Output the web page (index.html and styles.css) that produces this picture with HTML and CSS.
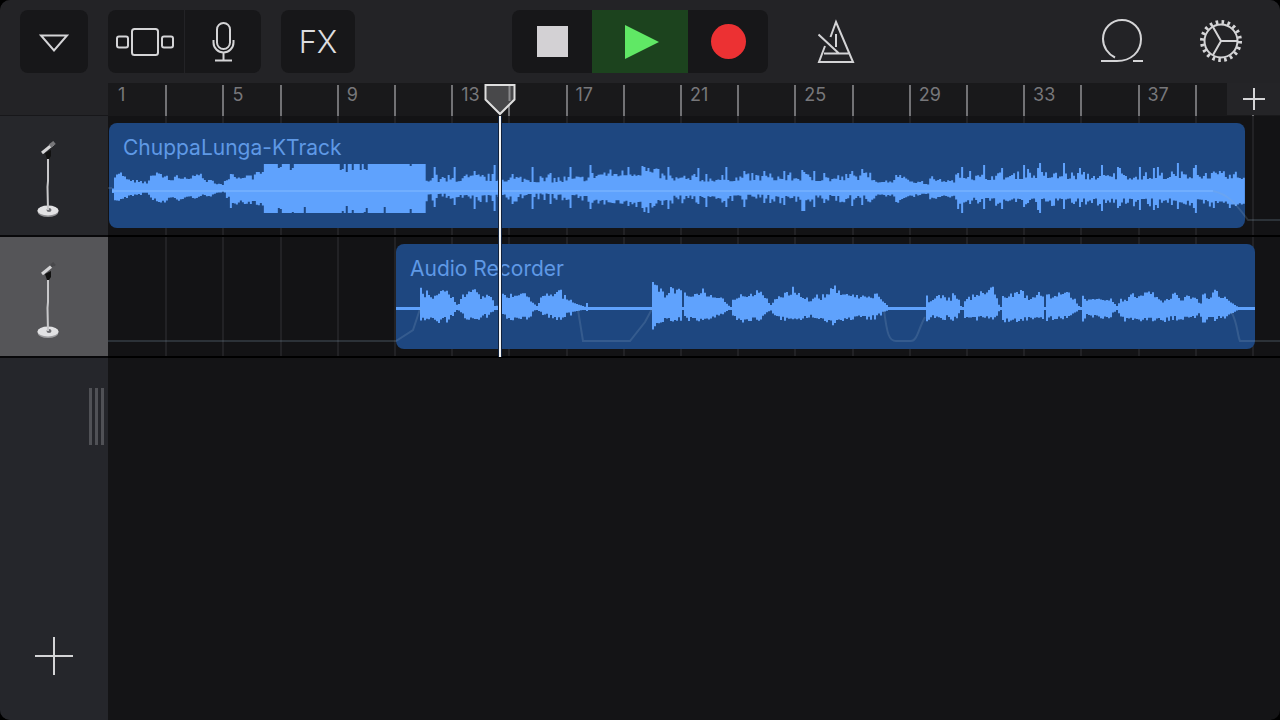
FILE: index.html
```html
<!DOCTYPE html>
<html lang="en">
<head>
<meta charset="utf-8">
<title>Tracks</title>
<link rel="stylesheet" href="styles.css">
</head>
<body>
<div class="app">
  <header class="toolbar">
    <div class="tools-left">
      <button class="tool tool-menu" type="button" aria-label="Menu">
        <svg width="32" height="22" viewBox="0 0 32 22"><path class="line" d="M3 4.500H29L16 19.500Z"/></svg>
      </button>
      <div class="tool-pair">
        <button class="tool" type="button" aria-label="Tracks view">
          <svg width="60" height="32" viewBox="1 0 60 32"><rect class="line" x="17" y="3" width="26" height="26" rx="2.500"/><rect class="line" x="2" y="10.500" width="11" height="11" rx="2"/><rect class="line" x="47" y="10.500" width="11" height="11" rx="2"/></svg>
        </button>
        <button class="tool" type="button" aria-label="Audio recorder">
          <svg width="26" height="42" viewBox="0 0 26 42"><rect class="line" x="7" y="2" width="13" height="26" rx="6.500"/><path class="line" d="M3.500 19v2.500a10 10 0 0 0 20 0V19M13.500 31.500V39M5 39.500h17"/></svg>
        </button>
      </div>
      <button class="tool tool-fx" type="button">FX</button>
    </div>

    <div class="transport">
      <button class="tool" type="button" aria-label="Stop"><span class="stop"></span></button>
      <button class="tool tool-play" type="button" aria-label="Play">
        <svg width="40" height="36" viewBox="-4 0 40 36"><path fill="#60e865" d="M1 1L35 18L1 35Z"/></svg>
      </button>
      <button class="tool" type="button" aria-label="Record"><span class="record"></span></button>
    </div>

    <div class="tools-right">
      <button class="plain" type="button" aria-label="Metronome">
        <svg width="42" height="48" viewBox="0 1 42 48"><path class="line" d="M15.500 20L21 5L38 45H4L10 29M9 36.500H35M3.500 17.500L24 36.500M21 17V30"/></svg>
      </button>
      <div class="view-tools">
        <button class="plain" type="button" aria-label="Loops">
          <svg width="46" height="46" viewBox="0 1 46 46"><path class="line" d="M2 43H18C32 43 42 34 42 21A19 19 0 0 0 4 21C4 29 9 36 16 39.500M34 43h10"/></svg>
        </button>
        <button class="plain" type="button" aria-label="Settings">
          <svg width="44" height="44" viewBox="0 1 44 44"><circle class="line" cx="22" cy="22" r="16.500"/><circle cx="22" cy="22" r="19" fill="none" stroke="#d4d4d6" stroke-width="4" stroke-dasharray="2.600 3.369"/><path class="line" d="M22 22H38M22 22L14 8M22 22L14 36"/></svg>
        </button>
      </div>
    </div>
  </header>

  <main class="workspace">
    <aside class="sidebar">
      <div class="ruler-space"></div>
      <button class="track-head" type="button" aria-label="ChuppaLunga-KTrack track">
        <svg width="24" height="78" viewBox="0 0 24 78"><ellipse cx="12" cy="70.500" rx="10.500" ry="5.500" fill="#8e8e91"/><ellipse cx="12" cy="69.500" rx="10.500" ry="5" fill="#e2e2e4"/><ellipse cx="13" cy="69" rx="2.500" ry="2" fill="#6d6d72"/><path d="M12 15V40L11.500 46L12 69" fill="none" stroke="#c8c8ca" stroke-width="2"/><path d="M9 12l6-3v6l-2 3h-2z" fill="#111"/><path d="M6 12L17 3" stroke="#d5d5d7" stroke-width="3"/><path d="M14 5L18.500 1.500" stroke="#77777a" stroke-width="4"/></svg>
      </button>
      <button class="track-head selected" type="button" aria-label="Audio Recorder track">
        <svg width="24" height="78" viewBox="0 0 24 78"><ellipse cx="12" cy="70.500" rx="10.500" ry="5.500" fill="#9e9ea1"/><ellipse cx="12" cy="69.500" rx="10.500" ry="5" fill="#e2e2e4"/><ellipse cx="13" cy="69" rx="2.500" ry="2" fill="#6d6d72"/><path d="M12 15V40L11.500 46L12 69" fill="none" stroke="#c8c8ca" stroke-width="2"/><path d="M9 12l6-3v6l-2 3h-2z" fill="#111"/><path d="M6 12L17 3" stroke="#d5d5d7" stroke-width="3"/><path d="M15 4.500L18.500 1.500" stroke="#48484b" stroke-width="4"/></svg>
      </button>
      <div class="sidebar-rest">
        <div class="grip"><i></i><i></i><i></i></div>
        <button class="add-track" type="button" aria-label="Add track">
          <svg width="40" height="40" viewBox="0 0 40 40"><path class="line" d="M20 1V39M1 20H39"/></svg>
        </button>
      </div>
    </aside>

    <section class="timeline">
      <div class="ruler bars">
        <span>1</span><span></span><span>5</span><span></span><span>9</span><span></span><span>13</span><span></span><span>17</span><span></span><span>21</span><span></span><span>25</span><span></span><span>29</span><span></span><span>33</span><span></span><span>37</span><span></span><span></span>
      </div>
      <button class="add-section" type="button" aria-label="Song sections">
        <svg width="22" height="22" viewBox="0 0 22 22"><path class="line" d="M11 0V22M0 11H22"/></svg>
      </button>

      <div class="lane">
        <div class="bars grid" aria-hidden="true"><span></span><span></span><span></span><span></span><span></span><span></span><span></span><span></span><span></span><span></span><span></span><span></span><span></span><span></span><span></span><span></span><span></span><span></span><span></span><span></span><span></span></div>
        <article class="region region-music">
          <h2>ChuppaLunga-KTrack</h2>
          <svg class="wave" viewBox="109 161 1137 60" preserveAspectRatio="none"><path id="music-wave" fill="#5fa2fd"/></svg>
        </article>
        <svg class="automation" viewBox="108 116 1172 119" preserveAspectRatio="none"><path d="M108 188H112"/><path class="level" d="M112 191H1213"/><path d="M1213 191C1228 194 1236 204 1248 220H1280"/></svg>
      </div>
      <div class="lane">
        <div class="bars grid" aria-hidden="true"><span></span><span></span><span></span><span></span><span></span><span></span><span></span><span></span><span></span><span></span><span></span><span></span><span></span><span></span><span></span><span></span><span></span><span></span><span></span><span></span><span></span></div>
        <article class="region region-voice">
          <h2>Audio Recorder</h2>
          <svg class="wave" viewBox="396 282 859 60" preserveAspectRatio="none"><path fill="#5fa2fd" d="M396 307H1255V310H396Z"/><path id="voice-wave" fill="#5fa2fd"/></svg>
        </article>
        <svg class="automation" viewBox="108 237 1172 119" preserveAspectRatio="none"><path d="M108 341H396L413 330L420 309"/><path d="M578 310L583 341H630L645 322L652 309"/><path d="M884 310C887 334 889 341 896 341H911C917 341 918 330 925 317"/><path d="M1231 311C1238 324 1237 334 1240 341H1280"/></svg>
      </div>

      <div class="playhead">
        <svg width="32" height="33" viewBox="0 0 32 33"><path d="M1.500 2H30.500V16.500L16 31L1.500 16.500Z" fill="#48484a" stroke="#dedede" stroke-width="2"/><path d="M25.500 3V18" stroke="#8a8a8c" stroke-width="2"/></svg>
        <i></i>
      </div>
    </section>
  </main>
</div>
<script src="waves.js"></script>
</body>
</html>
```

FILE: styles.css
```css
:root {
  --sidebar-w: 108px;
  --ruler-h: 33px;
  --lane-h: 121px;
  --icon: #d4d4d6;
}

* { box-sizing: border-box; }

body {
  margin: 0;
  background: #000;
  font-family: Inter, "Liberation Sans", sans-serif;
}

button {
  display: flex;
  align-items: center;
  justify-content: center;
  margin: 0;
  padding: 0;
  border: 0;
  background: none;
  color: inherit;
  font: inherit;
}

svg { display: block; }

.line {
  fill: none;
  stroke: var(--icon);
  stroke-width: 2;
}

.app {
  display: flex;
  flex-direction: column;
  min-height: 100vh;
  border-radius: 10px;
  overflow: hidden;
  background: #141416;
}

/* Toolbar */
.toolbar {
  display: grid;
  grid-template-columns: 1fr auto 1fr;
  padding: 10px 20px;
  background: #232326;
}

.tools-left { display: flex; gap: 20px; }

.tool {
  width: 76px;
  height: 63px;
  background: #171719;
}

.tool-menu { width: 68px; border-radius: 8px; }

.tool-pair {
  display: flex;
  gap: 1px;
  border-radius: 8px;
  overflow: hidden;
}

.tool-fx {
  width: 74px;
  border-radius: 8px;
  color: #dcdcde;
  font-size: 31px;
  font-weight: 300;
}

.transport {
  display: flex;
  border-radius: 8px;
  background: #171719;
}

.transport .tool { width: 80px; background: none; }
.transport .tool-play { width: 96px; background: #1c431e; }

.stop { width: 31px; height: 31px; background: #d3d1d4; }
.record { width: 35px; height: 35px; border-radius: 50%; background: #ec3133; }

.tools-right {
  display: flex;
  justify-content: space-between;
  padding: 0 7px 0 36px;
}

.plain { width: 64px; height: 63px; }
.view-tools { display: flex; gap: 35px; }

/* Workspace */
.workspace { display: flex; flex: 1; }

.sidebar {
  display: flex;
  flex-direction: column;
  width: var(--sidebar-w);
  background: #25262b;
}

.ruler-space {
  height: var(--ruler-h);
  background: #232326;
  border-bottom: 1px solid #17171a;
}

.track-head {
  height: var(--lane-h);
  padding: 8px 12px 0 0;
  border-bottom: 2px solid #08080a;
  background: #26272b;
}

.track-head.selected { background: #555558; }

.sidebar-rest {
  display: flex;
  flex: 1;
  flex-direction: column;
  justify-content: space-between;
  padding: 30px 0 44px;
}

.grip {
  display: flex;
  gap: 3px;
  justify-content: flex-end;
  padding-right: 4px;
}

.grip i { width: 3px; height: 57px; background: #505156; }
.add-track { height: 40px; }

.timeline { position: relative; flex: 1; }

.bars {
  display: grid;
  grid-template-columns: repeat(20, 57fr) 28fr;
}

.bars span { border-left: 2px solid #727275; }
.bars span:first-child { border-color: transparent; }

.ruler {
  height: var(--ruler-h);
  padding-top: 2px;
  background: #19191b;
  color: #77777a;
  font-size: 18px;
  line-height: 20px;
}

.ruler span { padding-left: 8px; }

.add-section {
  position: absolute;
  top: 0;
  right: 0;
  width: 53px;
  height: 32px;
  background: #242427;
}

.lane {
  position: relative;
  height: var(--lane-h);
  padding-top: 7px;
  border-bottom: 2px solid #000;
  background: #131315;
}

.grid { position: absolute; inset: 0; }
.grid span { border-color: #222225; }

.region {
  position: relative;
  height: 105px;
  border-radius: 8px;
  background: #1e4780;
  overflow: hidden;
}

.region-music { margin: 0 3% 0 1px; }
.region-voice { margin: 0 25px 0 288px; }

.region h2 {
  margin: 0;
  padding: 13px 14px 1px;
  color: #5f99e6;
  font-size: 21px;
  font-weight: 400;
  line-height: 24px;
}

.wave { width: 100%; height: 60px; }

.automation {
  position: absolute;
  inset: 0;
  width: 100%;
  height: 100%;
}

.automation path {
  fill: none;
  stroke: #8fb0c8;
  stroke-opacity: 0.2;
  stroke-width: 2;
}

.automation .level { stroke: #8cc0ff; stroke-opacity: 0.4; }

.playhead {
  position: absolute;
  top: 0;
  left: 376px;
  display: flex;
  flex-direction: column;
  align-items: center;
}

.playhead i {
  width: 4px;
  height: 241px;
  border: solid #10213c;
  border-width: 0 1px;
  background: #f4f4f4;
}
```

FILE: waves.js
```js
// Envelope points: [time, top, bottom]
const music = [
  [112,188,191],[113,178,201],[117,175,200],[119,172,199],[122,177,198],[126,179,197],[130,182,195],[135,182,194],
  [140,183,193],[146,183,193],[150,178,197],[154,175,199],[157,172,202],[160,176,203],[163,178,200],[166,176,201],
  [168,180,198],[172,180,197],[175,176,199],[178,180,200],[182,179,198],[187,180,197],[192,177,196],[196,174,198],
  [199,175,197],[202,179,195],[207,182,194],[212,182,195],[217,184,193],[222,186,192],[224,183,193],[226,180,196],
  [229,178,197],[232,175,201],[236,178,202],[240,178,201],[245,177,203],[250,175,202],[252,179,200],[256,174,203],
  [260,175,203],[263,170,205],[264,164,213],[425,164,213],[426,180,196],[445,181,195],[475,179,197],[500,180,196],
  [545,181,195],[580,181,196],[600,175,201],[625,175,202],[640,174,203],[655,174,205],[662,178,200],[675,180,197],
  [720,180,197],[760,179,196],[800,179,198],[830,180,196],[870,178,197],[880,182,195],[893,182,195],[896,176,201],
  [905,178,198],[912,182,195],[928,184,194],[930,178,199],[938,181,196],[954,182,196],[962,176,202],[975,179,199],
  [1000,178,200],[1040,177,200],[1090,178,200],[1140,178,200],[1190,177,200],[1215,177,202],[1235,178,204],[1246,177,204]
];
const musicPeaks = [
  [231,174,208],[435,167,207],[454,167,205],[475,171,209],[494,165,211],[513,174,204],[532,167,209],[551,173,204],
  [571,167,208],[590,165,209],[628,167,206],[642,166,208],[645,167,212],[649,168,213],[659,169,200],[669,167,209],
  [698,168,204],[707,174,207],[726,167,207],[745,171,207],[765,171,203],[784,171,205],[803,170,211],[805,172,211],
  [815,171,207],[825,173,203],[853,171,206],[862,169,205],[896,175,202],[958,173,209],[962,167,213],[970,171,204],
  [985,165,209],[1003,168,209],[1024,165,207],[1028,169,203],[1039,168,210],[1041,163,213],[1064,163,209],
  [1081,168,207],[1102,165,211],[1119,167,208],[1121,168,206],[1141,167,210],[1155,168,210],[1158,167,208],
  [1179,163,209],[1195,168,208],[1197,165,213]
];
const notches = [[279,168,208],[281,167,209],[290,170,213],[292,168,212],[305,164,207],[340,170,213],[343,169,211],
  [346,172,206],[352,170,210],[360,170,213],[364,169,212],[367,170,208],[385,164,207],[410,166,209]];

const voice = [
  [420,290,320],[423,300,318],[426,290,318],[428,295,318],[431,299,318],[434,296,318],[438,293,320],[441,290,318],
  [444,292,318],[447,290,320],[449,299,316],[452,297,316],[454,302,312],[457,306,309],[459,302,312],[463,297,315],
  [468,294,317],[472,290,319],[476,292,317],[480,298,315],[484,297,314],[488,297,314],[492,301,312],[494,306,309],
  [500,305,310],[503,292,314],[506,298,318],[511,296,320],[515,297,318],[519,294,319],[523,296,317],[527,297,316],
  [531,302,312],[536,306,309],[538,303,311],[542,298,313],[547,296,315],[552,296,316],[556,293,319],[559,290,317],
  [562,298,315],[567,299,313],[571,302,312],[576,304,311],[582,306,310],[585,307,310],[586,303,311],[588,307,310],
  [651,307,310],[652,284,326],[655,284,324],[657,291,322],[660,292,320],[664,297,318],[668,292,319],[671,290,318],
  [674,293,319],[678,288,318],[680,294,317],[682,307,310],[684,296,316],[690,296,318],[697,295,319],[703,290,320],
  [706,296,319],[712,297,317],[718,297,315],[723,300,314],[727,305,310],[730,307,310],[731,299,316],[735,299,317],
  [741,295,320],[747,297,320],[753,295,318],[758,292,318],[761,297,315],[766,301,312],[771,306,310],[773,299,316],
  [778,298,317],[785,296,318],[790,294,319],[792,288,319],[795,294,319],[800,296,318],[808,301,316],[813,302,315],
  [815,292,318],[818,300,317],[822,298,316],[827,295,320],[834,288,322],[837,294,320],[845,294,319],[853,297,317],
  [860,298,316],[866,297,317],[872,298,316],[874,294,316],[878,299,314],[883,302,312],[888,307,310],[924,307,310],
  [925,291,320],[928,302,317],[932,299,316],[938,298,316],[944,298,317],[949,302,315],[952,296,318],[956,299,317],
  [960,306,310],[962,307,310],[963,301,317],[968,300,317],[974,297,318],[980,294,317],[986,293,317],[990,290,318],
  [993,291,318],[996,300,314],[999,307,310],[1001,307,310],[1002,296,320],[1008,298,318],[1015,295,319],
  [1020,292,319],[1024,297,318],[1030,300,317],[1036,295,318],[1042,297,318],[1044,307,310],[1046,294,320],
  [1050,298,317],[1055,297,317],[1062,293,316],[1068,295,317],[1074,301,313],[1078,306,310],[1080,307,310],
  [1081,288,327],[1083,302,315],[1089,300,315],[1096,298,316],[1104,300,317],[1110,300,315],[1116,306,310],
  [1119,302,316],[1125,302,319],[1131,297,317],[1140,297,319],[1146,292,319],[1152,296,318],[1160,302,318],
  [1164,302,319],[1170,298,317],[1174,292,317],[1180,300,318],[1190,298,317],[1197,298,316],[1199,307,310],
  [1202,294,322],[1206,300,317],[1211,297,318],[1214,289,318],[1218,297,317],[1225,298,316],[1230,302,314],[1237,307,310]
];

let seed = 7;
function noise() {
  seed = (seed * 16807) % 2147483647;
  return seed / 2147483647;
}

function sample(points, x) {
  let i = 0;
  while (i < points.length - 2 && points[i + 1][0] <= x) i++;
  const [x0, t0, b0] = points[i];
  const [x1, t1, b1] = points[i + 1];
  const k = Math.min(1, Math.max(0, (x - x0) / (x1 - x0)));
  return [t0 + (t1 - t0) * k, b0 + (b1 - b0) * k];
}

// Builds a stepped silhouette: one bar for each step of time
function draw(id, points, peaks, jitter, step) {
  const end = points[points.length - 1][0];
  let d = "";
  for (let x = points[0][0]; x < end; x += step) {
    let [top, bottom] = sample(points, x);
    const amount = jitter(x, bottom - top);
    const n = noise();
    const m = noise();
    top -= (n * n * 1.6 - 0.3) * amount;
    bottom += (m * m * 1.6 - 0.3) * amount;
    const peak = peaks.find(p => p[0] >= x && p[0] < x + step);
    if (peak) [, top, bottom] = peak;
    d += `M${x} ${top.toFixed(1)}h${step}V${bottom.toFixed(1)}h-${step}z`;
  }
  document.getElementById(id).setAttribute("d", d);
}

draw("music-wave", music, musicPeaks.concat(notches),
  x => x < 263 ? 2 : x < 426 ? 0 : x > 878 && x < 955 ? 2 : 5, 2);
draw("voice-wave", voice, [], (x, size) => size > 10 ? 3 : 0, 2);
```
